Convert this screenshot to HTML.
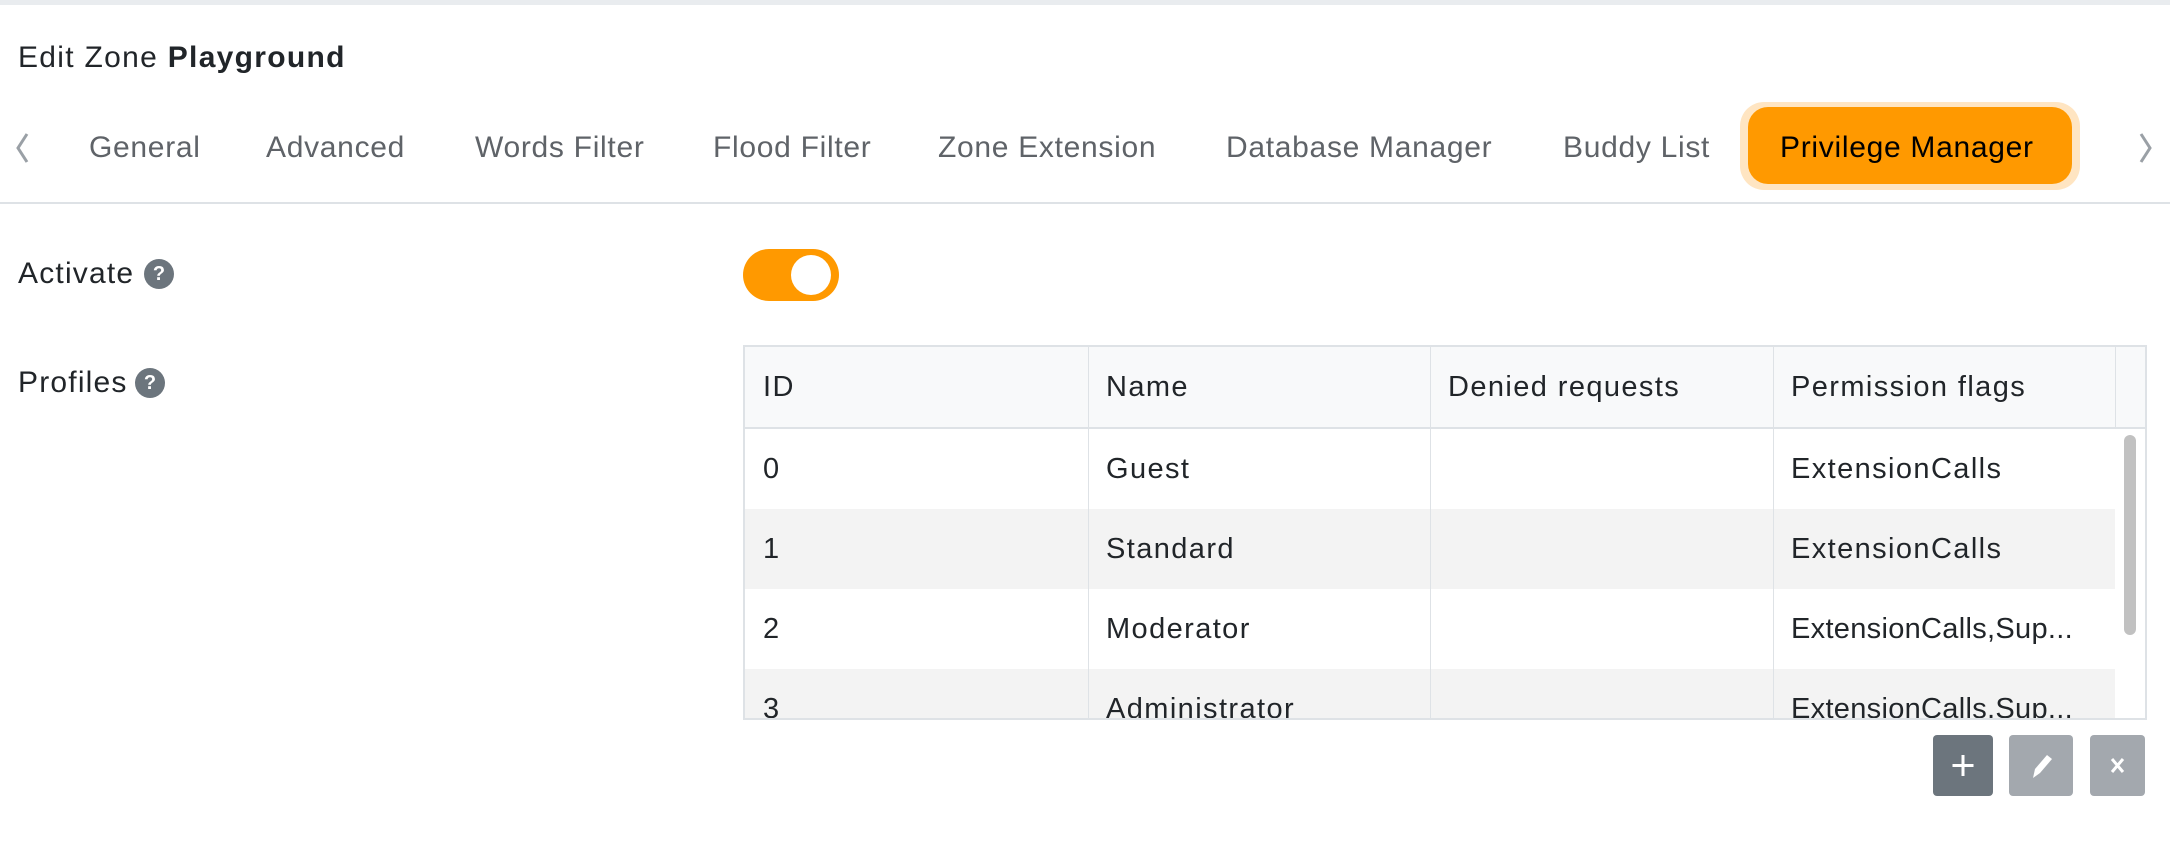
<!DOCTYPE html>
<html><head><style>
body{margin:0;width:2170px;height:856px;background:#fff;font-family:"Liberation Sans",sans-serif;position:relative;overflow:hidden;color:#212529}
.a{position:absolute}
.tab{position:absolute;top:128px;font-size:30px;letter-spacing:0.7px;color:#5f6368;line-height:40px;white-space:nowrap}
.help{position:absolute;width:30px;height:30px;border-radius:50%;background:#6c757d;color:#fff;font-size:20px;font-weight:bold;text-align:center;line-height:30px}
.lbl{position:absolute;left:18px;font-size:30px;letter-spacing:1.2px;line-height:40px}
.cell{position:absolute;font-size:29px;letter-spacing:1.4px;line-height:40px;white-space:nowrap;overflow:hidden}
</style></head><body>
<div class="a" style="left:0;top:0;width:2170px;height:5px;background:#e9ecef"></div>
<div class="a" style="left:18px;top:38px;font-size:30px;letter-spacing:1.3px;line-height:40px">Edit Zone <b>Playground</b></div>
<svg class="a" style="left:10px;top:130px" width="24" height="36"><path d="M17 4 L8 18 L17 32" stroke="#9aa0a6" stroke-width="3" fill="none"/></svg>
<div class="tab" style="left:89px">General</div>
<div class="tab" style="left:266px">Advanced</div>
<div class="tab" style="left:475px">Words Filter</div>
<div class="tab" style="left:713px">Flood Filter</div>
<div class="tab" style="left:938px">Zone Extension</div>
<div class="tab" style="left:1226px">Database Manager</div>
<div class="tab" style="left:1563px">Buddy List</div>
<div class="a" style="left:1740px;top:102px;width:340px;height:88px;border-radius:24px;background:#ffe5c2"></div>
<div class="a" style="left:1748px;top:107px;width:324px;height:77px;border-radius:20px;background:#ff9900"></div>
<div class="tab" style="left:1780px;color:#000">Privilege Manager</div>
<svg class="a" style="left:2134px;top:130px" width="24" height="36"><path d="M7 4 L16 18 L7 32" stroke="#9aa0a6" stroke-width="3" fill="none"/></svg>
<div class="a" style="left:0;top:202px;width:2170px;height:2px;background:#dee2e6"></div>

<div class="lbl" style="top:254px">Activate</div>
<div class="help" style="left:144px;top:259px">?</div>
<div class="a" style="left:743px;top:249px;width:96px;height:52px;border-radius:26px;background:#ff9900"></div>
<div class="a" style="left:791px;top:255px;width:40px;height:40px;border-radius:50%;background:#fff"></div>

<div class="lbl" style="top:363px">Profiles</div>
<div class="help" style="left:135px;top:368px">?</div>

<div class="a" style="left:743px;top:345px;width:1400px;height:371px;border:2px solid #dee2e6;overflow:hidden">
 <div class="a" style="left:0;top:0;width:1400px;height:80px;background:#f8f9fa;border-bottom:2px solid #dee2e6"></div>
 <div class="a" style="left:0;top:162px;width:1370px;height:80px;background:#f3f3f3"></div>
 <div class="a" style="left:0;top:322px;width:1370px;height:80px;background:#f3f3f3"></div>
 <div class="a" style="left:343px;top:0;width:1px;height:400px;background:#dee2e6"></div>
 <div class="a" style="left:685px;top:0;width:1px;height:400px;background:#dee2e6"></div>
 <div class="a" style="left:1028px;top:0;width:1px;height:400px;background:#dee2e6"></div>
 <div class="a" style="left:1370px;top:0;width:1px;height:82px;background:#dee2e6"></div>
 <div class="a" style="left:1379px;top:88px;width:12px;height:200px;border-radius:6px;background:#c1c1c1"></div>
 <div class="cell" style="left:18px;top:20px">ID</div>
 <div class="cell" style="left:361px;top:20px">Name</div>
 <div class="cell" style="left:703px;top:20px">Denied requests</div>
 <div class="cell" style="left:1046px;top:20px">Permission flags</div>
 <div class="cell" style="left:18px;top:102px">0</div><div class="cell" style="left:361px;top:102px">Guest</div><div class="cell" style="left:1046px;top:102px">ExtensionCalls</div>
 <div class="cell" style="left:18px;top:182px">1</div><div class="cell" style="left:361px;top:182px">Standard</div><div class="cell" style="left:1046px;top:182px">ExtensionCalls</div>
 <div class="cell" style="left:18px;top:262px">2</div><div class="cell" style="left:361px;top:262px">Moderator</div><div class="cell" style="left:1046px;top:262px;letter-spacing:0.3px">ExtensionCalls,Sup...</div>
 <div class="cell" style="left:18px;top:342px">3</div><div class="cell" style="left:361px;top:342px">Administrator</div><div class="cell" style="left:1046px;top:342px;letter-spacing:0.3px">ExtensionCalls,Sup...</div>
</div>

<div class="a" style="left:1933px;top:735px;width:60px;height:61px;border-radius:4px;background:#6c757d"></div>
<svg class="a" style="left:1933px;top:735px" width="60" height="61"><path d="M30 20V41M19.5 30.5H40.5" stroke="#fff" stroke-width="3"/></svg>
<div class="a" style="left:2009px;top:735px;width:64px;height:61px;border-radius:4px;background:#a3a8ae"></div>
<svg class="a" style="left:2009px;top:735px" width="64" height="61"><path d="M24 43 L26 34 L38 20 L43 24 L31 38 Z" fill="#fff"/></svg>
<div class="a" style="left:2090px;top:735px;width:55px;height:61px;border-radius:4px;background:#a3a8ae"></div>
<svg class="a" style="left:2090px;top:735px" width="55" height="61"><path d="M22 24L33 37M33 24L22 37" stroke="#fff" stroke-width="3"/></svg>
</body></html>
